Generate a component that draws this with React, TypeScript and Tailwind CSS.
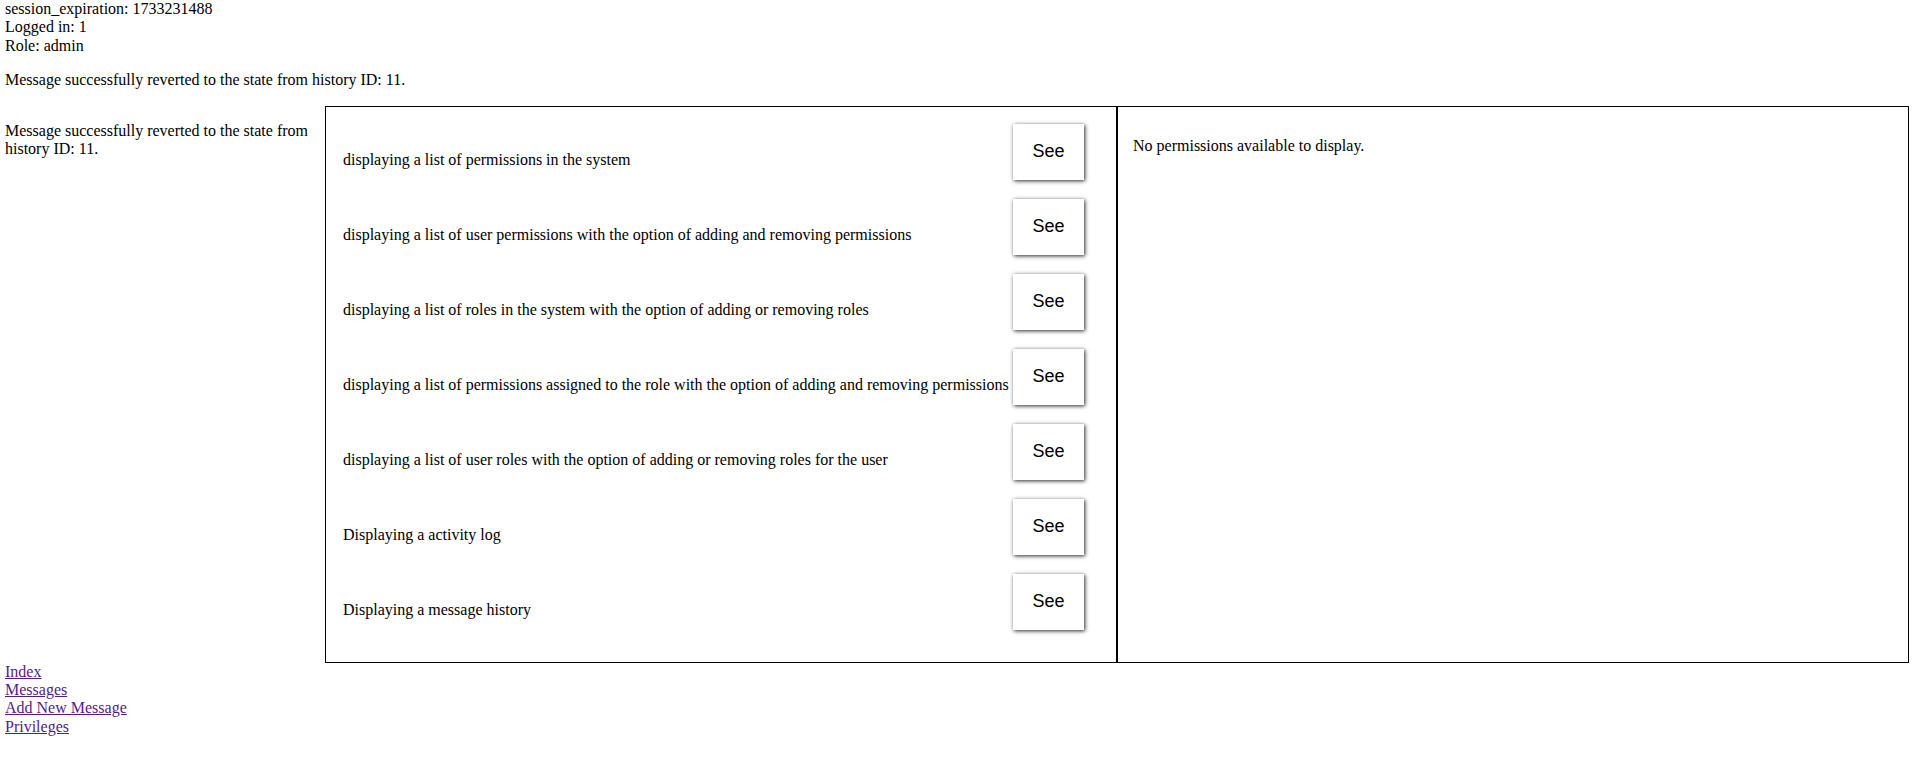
import React from 'react';

const FEATURES = [
  'displaying a list of permissions in the system',
  'displaying a list of user permissions with the option of adding and removing permissions',
  'displaying a list of roles in the system with the option of adding or removing roles',
  'displaying a list of permissions assigned to the role with the option of adding and removing permissions',
  'displaying a list of user roles with the option of adding or removing roles for the user',
  'Displaying a activity log',
  'Displaying a message history',
];

const LINKS = ['Index', 'Messages', 'Add New Message', 'Privileges'];

export default function App() {
  return (
    <div className="w-[1916px] min-h-[762px] bg-white text-black text-[16px] leading-[1.15] font-['Liberation_Serif',serif]">
      {/* session info */}
      <div className="pl-[5px]">
        <div>session_expiration: 1733231488</div>
        <div>Logged in: 1</div>
        <div>Role: admin</div>
        <p className="my-4">Message successfully reverted to the state from history ID: 11.</p>
      </div>

      <div className="flex">
        <div className="w-[325px] shrink-0 pl-[5px] pr-[5px]">
          <p className="mt-4">Message successfully reverted to the state from history ID: 11.</p>
        </div>

        <div className="flex w-[1584px] h-[557px] border border-black">
          <div className="w-[791px] shrink-0 border-r border-black pt-[17px] pl-[17px] pr-[32px] flex flex-col gap-[19px]">
            {FEATURES.map((f) => (
              <div key={f} className="flex items-end justify-between h-[56px]">
                <span className="pb-[10px] whitespace-nowrap">{f}</span>
                <button className="w-[71px] h-[56px] shrink-0 bg-white text-[18px] font-['Liberation_Sans',sans-serif] shadow-[1px_1px_4px_rgba(0,0,0,0.85)] pb-[1px]">
                  See
                </button>
              </div>
            ))}
          </div>
          <div className="flex-1 border-l border-black pl-[15px] pt-[30px]">
            <div>No permissions available to display.</div>
          </div>
        </div>
      </div>

      <nav className="pl-[5px] flex flex-col items-start">
        {LINKS.map((l) => (
          <a key={l} href="#" className="text-[#551a8b] underline">
            {l}
          </a>
        ))}
      </nav>
    </div>
  );
}
